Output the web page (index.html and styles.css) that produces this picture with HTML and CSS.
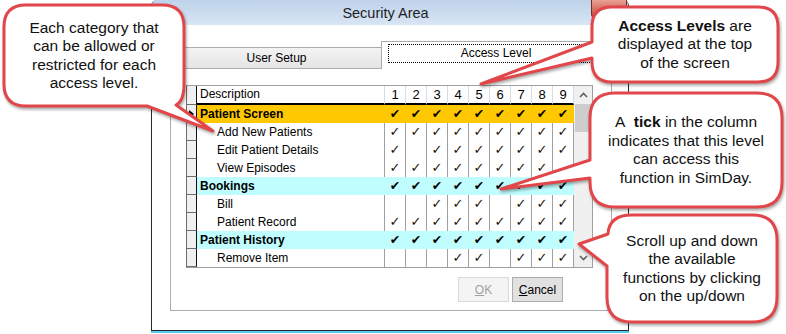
FILE: index.html
```html
<!DOCTYPE html>
<html lang="en">
<head>
    <meta charset="UTF-8">
    <meta name="viewport" content="width=device-width, initial-scale=1.0">
    <title>Security Area - Access Level</title>
    <link rel="stylesheet" href="styles.css">
</head>
<body>
    <div class="page">
        <div class="window">
            <div class="titlebar">
                <span class="title">Security Area</span>
                <span class="close-btn"></span>
            </div>
            <div class="window-body">
                <div class="tabs">
                    <div class="tab">User Setup</div>
                    <div class="tab active"><span class="focus">Access Level</span></div>
                </div>
                <div class="tab-panel">
                    <div class="grid">
                        <div class="grid-rows">
                            <div class="row row-head">
                                <div class="rh"></div><div class="desc">Description</div>
                                <div class="lv">1</div><div class="lv">2</div><div class="lv">3</div><div class="lv">4</div><div class="lv">5</div><div class="lv">6</div><div class="lv">7</div><div class="lv">8</div><div class="lv">9</div>
                            </div>
                            <div class="row cat orange">
                                <div class="rh current"></div><div class="desc">Patient Screen</div>
                                <div class="lv">✔</div><div class="lv">✔</div><div class="lv">✔</div><div class="lv">✔</div><div class="lv">✔</div><div class="lv">✔</div><div class="lv">✔</div><div class="lv">✔</div><div class="lv">✔</div>
                            </div>
                            <div class="row sub">
                                <div class="rh"></div><div class="desc">Add New Patients</div>
                                <div class="lv">✓</div><div class="lv">✓</div><div class="lv">✓</div><div class="lv">✓</div><div class="lv">✓</div><div class="lv">✓</div><div class="lv">✓</div><div class="lv">✓</div><div class="lv">✓</div>
                            </div>
                            <div class="row sub">
                                <div class="rh"></div><div class="desc">Edit Patient Details</div>
                                <div class="lv">✓</div><div class="lv"></div><div class="lv">✓</div><div class="lv">✓</div><div class="lv">✓</div><div class="lv">✓</div><div class="lv">✓</div><div class="lv">✓</div><div class="lv">✓</div>
                            </div>
                            <div class="row sub">
                                <div class="rh"></div><div class="desc">View Episodes</div>
                                <div class="lv">✓</div><div class="lv">✓</div><div class="lv">✓</div><div class="lv">✓</div><div class="lv">✓</div><div class="lv">✓</div><div class="lv">✓</div><div class="lv">✓</div><div class="lv"></div>
                            </div>
                            <div class="row cat cyan">
                                <div class="rh"></div><div class="desc">Bookings</div>
                                <div class="lv">✔</div><div class="lv">✔</div><div class="lv">✔</div><div class="lv">✔</div><div class="lv">✔</div><div class="lv">✔</div><div class="lv">✔</div><div class="lv">✔</div><div class="lv">✔</div>
                            </div>
                            <div class="row sub">
                                <div class="rh"></div><div class="desc">Bill</div>
                                <div class="lv"></div><div class="lv"></div><div class="lv">✓</div><div class="lv">✓</div><div class="lv">✓</div><div class="lv"></div><div class="lv">✓</div><div class="lv">✓</div><div class="lv">✓</div>
                            </div>
                            <div class="row sub">
                                <div class="rh"></div><div class="desc">Patient Record</div>
                                <div class="lv">✓</div><div class="lv">✓</div><div class="lv">✓</div><div class="lv">✓</div><div class="lv">✓</div><div class="lv">✓</div><div class="lv">✓</div><div class="lv">✓</div><div class="lv">✓</div>
                            </div>
                            <div class="row cat cyan">
                                <div class="rh"></div><div class="desc">Patient History</div>
                                <div class="lv">✔</div><div class="lv">✔</div><div class="lv">✔</div><div class="lv">✔</div><div class="lv">✔</div><div class="lv">✔</div><div class="lv">✔</div><div class="lv">✔</div><div class="lv">✔</div>
                            </div>
                            <div class="row sub">
                                <div class="rh"></div><div class="desc">Remove Item</div>
                                <div class="lv"></div><div class="lv"></div><div class="lv"></div><div class="lv">✓</div><div class="lv">✓</div><div class="lv"></div><div class="lv">✓</div><div class="lv">✓</div><div class="lv">✓</div>
                            </div>
                        </div>
                        <div class="scrollbar">
                            <div class="sb-btn">
                                <svg width="9" height="6" viewBox="0 0 9 6"><polyline points="1,5 4.5,1.5 8,5" fill="none" stroke="#606060" stroke-width="1.6"/></svg>
                            </div>
                            <div class="sb-thumb"></div>
                            <div class="sb-track"></div>
                            <div class="sb-btn">
                                <svg width="9" height="6" viewBox="0 0 9 6"><polyline points="1,1 4.5,4.5 8,1" fill="none" stroke="#606060" stroke-width="1.6"/></svg>
                            </div>
                        </div>
                    </div>
                    <div class="buttons">
                        <button class="btn" disabled><u>O</u>K</button>
                        <button class="btn"><u>C</u>ancel</button>
                    </div>
                </div>
            </div>
        </div>

        <!-- speech bubbles drawn over the dialog -->
        <svg class="callout-art" width="786" height="334" viewBox="0 0 786 334">
            <path d="M 26,5 H 162 Q 184,5 184,27 V 84 Q 184,101 176,105 L 213,131 L 147,106 H 26 Q 4,106 4,84 V 27 Q 4,5 26,5 Z"/>
            <path d="M 612,7 H 758 Q 778,7 778,27 V 62 Q 778,82 758,82 H 612 Q 592,82 592,62 V 58 L 481,84 L 592,42 V 27 Q 592,7 612,7 Z"/>
            <path d="M 615,93 H 757 Q 782,93 782,118 V 182 Q 782,207 757,207 H 615 Q 590,207 590,182 V 178 L 501,189 L 590,160 V 118 Q 590,93 615,93 Z"/>
            <path d="M 632,215 H 752 Q 777,215 777,240 V 297 Q 777,322 752,322 H 632 Q 607,322 607,297 V 266 L 579,244 L 608,234 Q 609,215 632,215 Z"/>
        </svg>
        <div class="callout callout-category">Each category that<br>can be allowed or<br>restricted for each<br>access level.</div>
        <div class="callout callout-levels"><span><b>Access Levels</b> are<br>displayed at the top<br>of the screen</span></div>
        <div class="callout callout-tick"><span>A&nbsp; <b>tick</b> in the column<br>indicates that this level<br>can access this<br>function in SimDay.</span></div>
        <div class="callout callout-scroll">Scroll up and down<br>the available<br>functions by clicking<br>on the up/down</div>
    </div>
</body>
</html>
```

FILE: styles.css
```css
* {
    margin: 0;
    padding: 0;
    box-sizing: border-box;
}

body {
    font-family: "Liberation Sans", Arial, sans-serif;
    background: #fff;
    color: #000;
}

.page {
    position: relative;
    width: 786px;
    height: 334px;
    overflow: hidden;
}

/* dialog window */
.window {
    margin-left: 151px;
    width: 478px;
    height: 331px;
    border: 1px solid #262a30;
    border-top: none;
    border-radius: 6px 6px 0 0;
    background: #fff;
    box-shadow: 0 2px 0 #5cc8ec;
}

.titlebar {
    display: flex;
    height: 25px;
    background: linear-gradient(#bed2ea, #d8e5f4);
    border-radius: 5px 5px 0 0;
}

.title {
    flex: 1;
    text-align: center;
    padding-left: 28px;
    font-size: 14.5px;
    line-height: 27px;
    color: #1e1e1e;
}

.close-btn {
    width: 36px;
    height: 18px;
    margin-right: 1px;
    background: linear-gradient(#e8a093, #c7473a);
    border: 1px solid #7a2a22;
    border-top: none;
    border-radius: 0 0 4px 4px;
}

.window-body {
    padding: 16px 17px 0 18px;
}

/* tabs */
.tabs {
    display: flex;
    align-items: flex-end;
    height: 27px;
    font-size: 12px;
}

.tab {
    width: 213px;
    height: 21px;
    border: 1px solid #acacac;
    border-bottom: none;
    background: linear-gradient(#f3f3f3, #e5e5e5);
    text-align: center;
    line-height: 20px;
}

.tab.active {
    position: relative;
    width: 230px;
    height: 28px;
    margin-left: -2px;
    margin-bottom: -1px;
    padding: 2px 6px 5px 6px;
    background: #fff;
}

.focus {
    display: block;
    height: 19px;
    border: 1px dotted #000;
    line-height: 17px;
}

.tab-panel {
    width: 442px;
    height: 243px;
    border: 1px solid #acacac;
    padding: 16px 0 0 15px;
}

/* access grid */
.grid {
    display: flex;
    width: max-content;
    border: 1px solid #a0a0a0;
    border-left-color: #6e6e6e;
}

.grid-rows {
    display: flex;
    flex-direction: column;
}

.row {
    display: grid;
    grid-template-columns: 10px 188px repeat(9, 21px);
    height: 18px;
    font-size: 12px;
}

.row-head {
    height: 19px;
}

.rh {
    display: flex;
    align-items: center;
    justify-content: flex-end;
    background: #f0f0f0;
    border-right: 1px solid #111;
    border-bottom: 1px solid #6e6e6e;
}

.rh.current::after {
    content: "";
    margin-right: 2px;
    border-left: 5px solid #000;
    border-top: 4px solid transparent;
    border-bottom: 4px solid transparent;
}

.desc {
    padding-left: 3px;
    line-height: 18px;
    white-space: nowrap;
    border-right: 1px solid #a0a0a0;
}

.sub .desc {
    padding-left: 20px;
}

.cat .desc {
    font-weight: bold;
}

.lv {
    text-align: center;
    font-family: "DejaVu Sans", sans-serif;
    font-size: 13px;
    line-height: 18px;
    color: #1a1205;
    border-right: 1px solid #a0a0a0;
}

.cat .lv {
    font-size: 12.5px;
    color: #000;
}

.cat .desc,
.cat .lv {
    border-right-color: transparent;
}

.orange .desc,
.orange .lv {
    background: #ffc800;
}

.cyan .desc,
.cyan .lv {
    background: #c0fdff;
}

.row-head .desc,
.row-head .lv {
    line-height: 17px;
    border-right: 1px solid #d5dde6;
    border-bottom: 2px solid #000;
}

.row-head .desc {
    font-size: 12px;
}

.row-head .lv {
    font-family: "Liberation Sans", Arial, sans-serif;
    font-size: 13px;
    color: #000;
}

.scrollbar {
    display: flex;
    flex-direction: column;
    width: 18px;
    background: #f0f0f0;
}

.sb-btn {
    display: flex;
    align-items: center;
    justify-content: center;
    height: 18px;
}

.sb-thumb {
    height: 28px;
    margin: 0 1px;
    background: #cdcdcd;
}

.sb-track {
    flex: 1;
}

/* dialog buttons */
.buttons {
    display: flex;
    justify-content: flex-end;
    gap: 3px;
    margin-top: 9px;
    padding-right: 48px;
}

.btn {
    width: 51px;
    height: 25px;
    font-family: inherit;
    font-size: 12px;
    color: #000;
    background: #e1e1e1;
    border: 1px solid #adadad;
}

.btn:disabled {
    color: #a0a0a0;
    background: #f4f4f4;
    border-color: #d9d9d9;
}

/* callouts */
.callout-art {
    position: absolute;
    left: 0;
    top: 0;
    filter: drop-shadow(1px 2px 1.5px rgba(0, 0, 0, 0.35));
}

.callout-art path {
    fill: #fff;
    stroke: #e1474a;
    stroke-width: 3;
    stroke-linejoin: round;
}

.callout {
    position: absolute;
    display: flex;
    align-items: center;
    justify-content: center;
    text-align: center;
    font-size: 15.5px;
    line-height: 18.5px;
    color: #111;
}

.callout-category {
    left: 4px;
    top: 5px;
    width: 180px;
    height: 101px;
}

.callout-levels {
    left: 592px;
    top: 7px;
    width: 186px;
    height: 75px;
}

.callout-tick {
    left: 590px;
    top: 93px;
    width: 192px;
    height: 114px;
}

.callout-scroll {
    left: 607px;
    top: 215px;
    width: 170px;
    height: 107px;
}
```
